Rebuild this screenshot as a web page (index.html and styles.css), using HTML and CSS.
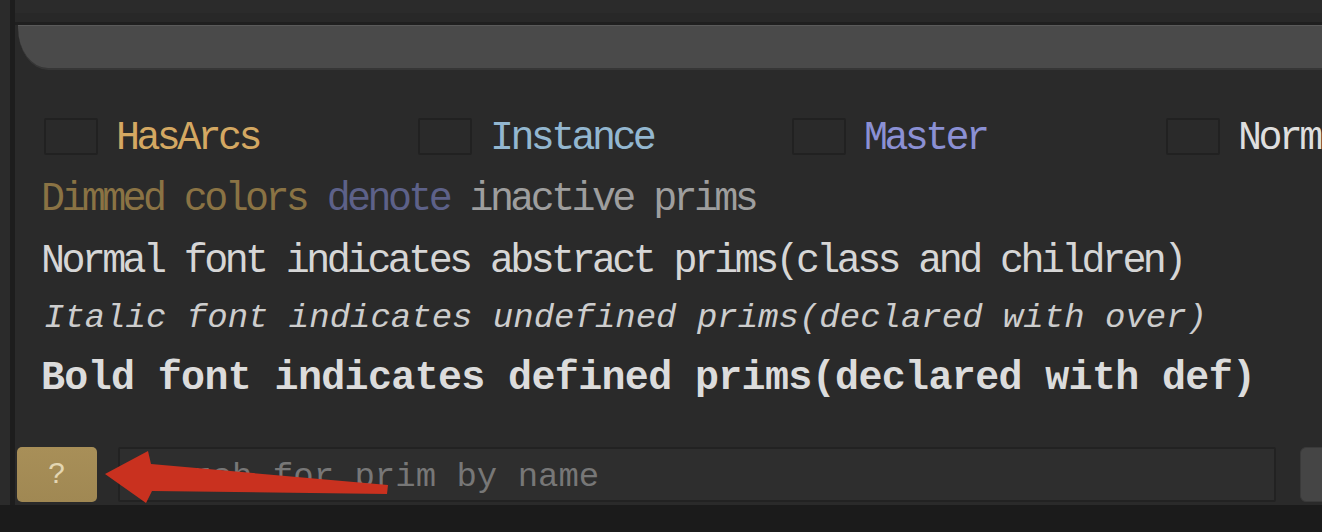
FILE: index.html
```html
<!DOCTYPE html>
<html>
<head>
<meta charset="utf-8">
<link rel="stylesheet" href="styles.css">
</head>
<body>
<div class="frame">
  <div class="panel">
    <div class="topstrip"></div>
    <div class="tabbar"></div>
    <div class="legend">
      <div class="checks">
        <div class="check"><span class="box"></span><span class="lbl c-arcs">HasArcs</span></div>
        <div class="check"><span class="box"></span><span class="lbl c-inst">Instance</span></div>
        <div class="check"><span class="box"></span><span class="lbl c-master">Master</span></div>
        <div class="check"><span class="box"></span><span class="lbl c-norm">Norm</span></div>
      </div>
      <div class="line dimmed"><span class="d-arcs">Dimmed colors</span> <span class="d-inst">denote</span> <span class="d-rest">inactive prims</span></div>
      <div class="line normal">Normal font indicates abstract prims(class and children)</div>
      <div class="line italic">Italic font indicates undefined prims(declared with over)</div>
      <div class="line bold">Bold font indicates defined prims(declared with def)</div>
    </div>
    <div class="search-row">
      <div class="help-btn">?</div>
      <div class="search-field"><span class="placeholder">Search for prim by name</span></div>
      <div class="side-btn"></div>
    </div>
  </div>
</div>
<div class="footer"></div>
<svg class="arrow" width="1322" height="532" viewBox="0 0 1322 532">
  <polygon points="105,474 148,451 151,464 388,485 387,494 152,491 146,503" fill="#c9311f"/>
</svg>
</body>
</html>
```

FILE: styles.css
```css
html, body {
  margin: 0;
  padding: 0;
  background: #2b2b2b;
  width: 1322px;
  height: 532px;
  overflow: hidden;
  position: relative;
  font-family: "Liberation Mono", "DejaVu Sans Mono", monospace;
}

.frame {
  padding-left: 10px;
  height: 505px;
  background: #2b2b2b;
}

.panel {
  border-left: 5px solid #1d1d1d;
  height: 505px;
  background: #2a2a2a;
  display: flex;
  flex-direction: column;
  overflow: hidden;
}

.topstrip {
  height: 25px;
  flex: none;
  background: linear-gradient(to bottom, #2b2b2b 0, #2b2b2b 13px, #282828 13px, #282828 22px, #1f1f1f 22px);
}

.tabbar {
  flex: none;
  margin-left: 3px;
  height: 42px;
  background: #4a4a4a;
  border-top: 1px solid #5a5a5a;
  border-bottom: 2px solid #363636;
  border-bottom-left-radius: 30px 42px;
}

.legend {
  padding-left: 26px;
  white-space: nowrap;
}

.checks {
  margin-top: 44px;
  height: 44px;
  display: grid;
  grid-template-columns: repeat(4, 374px);
  align-items: start;
}

.check {
  display: flex;
  align-items: flex-start;
  margin-left: 3px;
  height: 44px;
}

.box {
  margin-top: 4px;
  width: 50px;
  height: 33px;
  background: #2a2a2a;
  border: 2px solid #212121;
  border-radius: 2px;
  flex: none;
}

.lbl {
  margin-left: 18px;
  margin-top: 3px;
  font-size: 40px;
  line-height: 44px;
  letter-spacing: -3.6px;
}

.c-arcs { color: #d4a862; }
.c-inst { color: #93b7d0; }
.c-master { color: #8b90d4; }
.c-norm { color: #dedede; }

.line {
  font-size: 40px;
  line-height: 44px;
  letter-spacing: -3.6px;
  height: 44px;
}

.dimmed { margin-top: 20px; }
.d-arcs { color: #8a7344; }
.d-inst { color: #5d6189; }
.d-rest { color: #9e9e9e; }

.normal {
  margin-top: 18px;
  color: #d6d6d6;
}

.italic {
  margin-top: 12px;
  font-size: 34px;
  letter-spacing: 0;
  font-style: italic;
  color: #cdcdcd;
  padding-left: 3px;
}

.bold {
  margin-top: 17px;
  font-weight: bold;
  letter-spacing: -0.65px;
  color: #dcdcdc;
}

.search-row {
  margin-top: 46px;
  display: flex;
  align-items: center;
  height: 55px;
}

.help-btn {
  flex: none;
  margin-left: 2px;
  width: 80px;
  height: 55px;
  border-radius: 5px;
  background: linear-gradient(to bottom, #a88f58, #a08853);
  color: #e3d6b2;
  font-size: 30px;
  display: flex;
  align-items: center;
  justify-content: center;
}

.search-field {
  flex: none;
  margin-left: 21px;
  width: 1144px;
  height: 51px;
  border: 2px solid #222222;
  border-radius: 2px;
  background: #2e2e2e;
  display: flex;
  align-items: center;
  padding-left: 10px;
  box-sizing: content-box;
}

.placeholder {
  font-size: 34px;
  padding-top: 5px;
  color: #777777;
}

.side-btn {
  flex: none;
  margin-left: 24px;
  width: 60px;
  height: 53px;
  border: 1px solid #3a3a3a;
  border-radius: 6px;
  background: #454545;
}

.footer {
  height: 27px;
  background: #1b1b1b;
}

.arrow {
  position: absolute;
  left: 0;
  top: 0;
  pointer-events: none;
}
```
